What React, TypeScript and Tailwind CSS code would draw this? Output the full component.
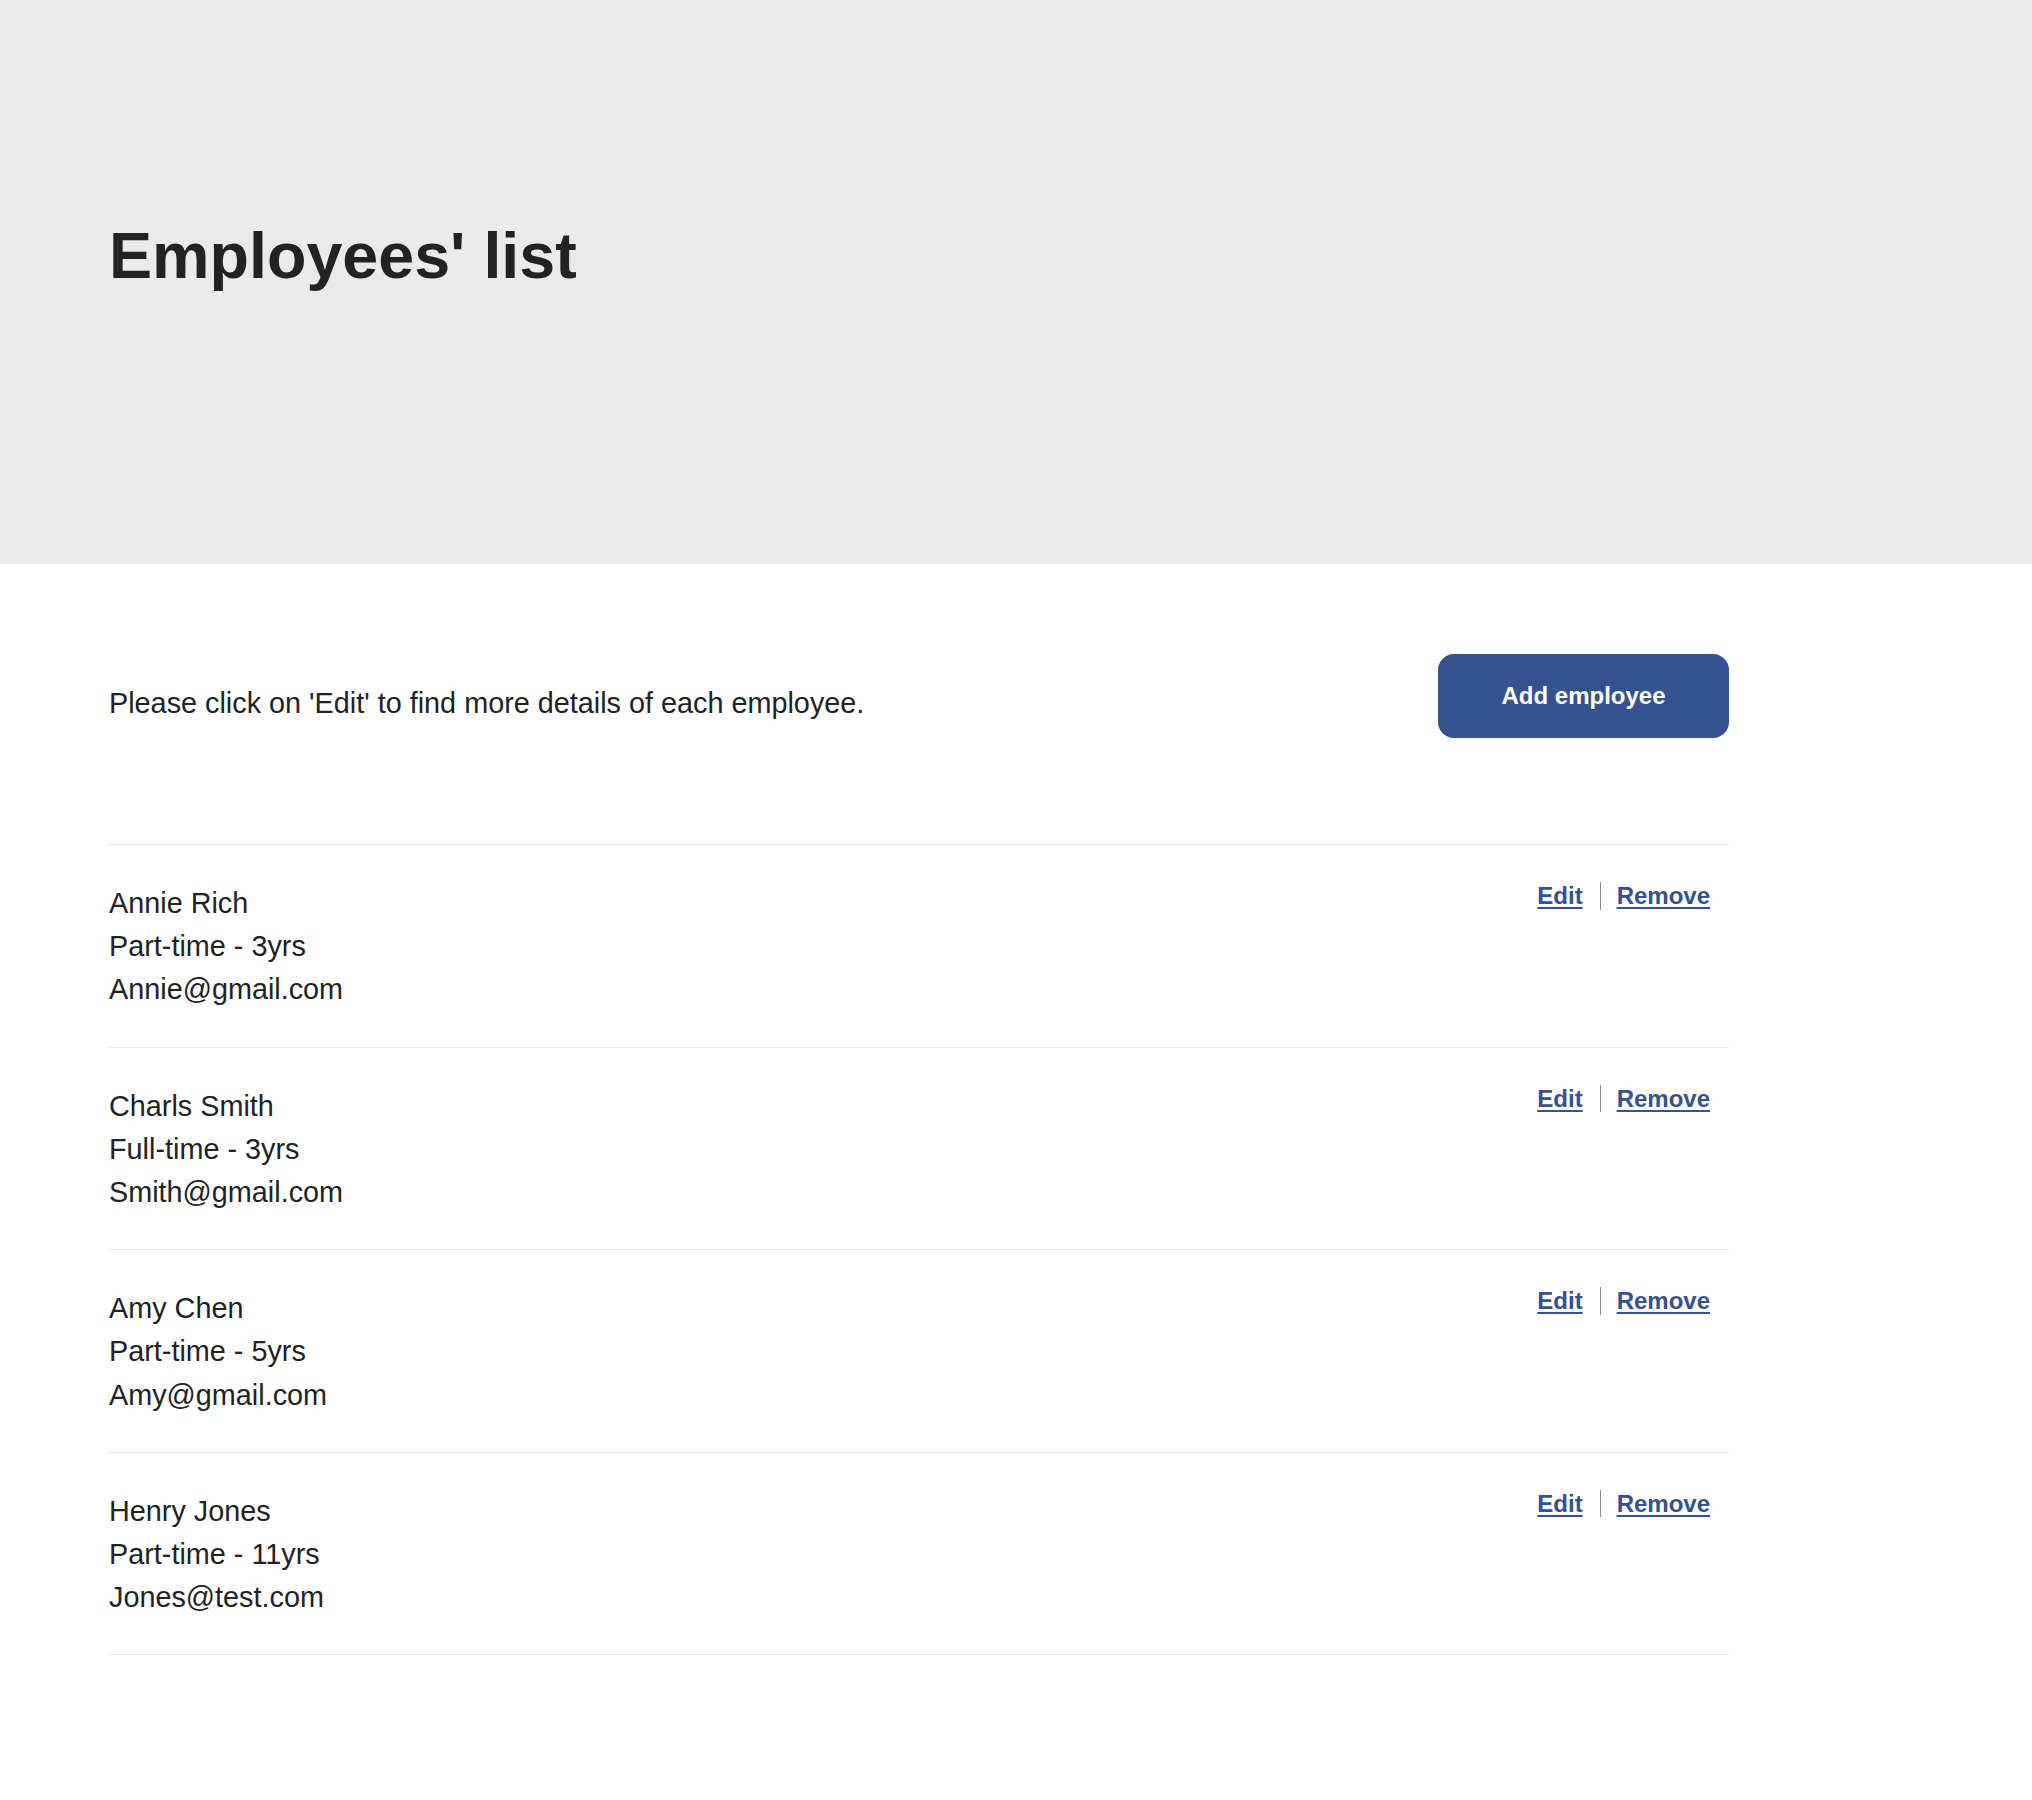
const employees = [
  { name: 'Annie Rich', type: 'Part-time', years: 3, email: 'Annie@gmail.com' },
  { name: 'Charls Smith', type: 'Full-time', years: 3, email: 'Smith@gmail.com' },
  { name: 'Amy Chen', type: 'Part-time', years: 5, email: 'Amy@gmail.com' },
  { name: 'Henry Jones', type: 'Part-time', years: 11, email: 'Jones@test.com' },
];

const App = () => {
  return (
    <div className="min-h-[1800px] bg-white text-[#222222] font-['Liberation_Sans',Arial,sans-serif]">
      {/* Header */}
      <header className="h-[564px] bg-[#eaeaea] px-[109px] pt-[224px]">
        <h1 className="text-[64.6px] font-bold leading-none">Employees' list</h1>
      </header>

      <main className="ml-[109px] w-[1620px] pt-[90px]">
        <div className="flex items-start justify-between mb-[106px]">
          <p className="mt-[28px] text-[28.8px] leading-[1.5]">
            Please click on 'Edit' to find more details of each employee.
          </p>
          <button className="w-[291px] h-[84px] rounded-[16px] bg-[#34528f] text-white text-[24px] font-bold">
            Add employee
          </button>
        </div>

        <ul className="border-b border-[#e6e6e6]">
          {employees.map((emp) => (
            <li
              key={emp.email}
              className="flex justify-between border-t border-[#e6e6e6] pt-[37px] pb-[35px]"
            >
              <div className="text-[28.8px] leading-[1.5]">
                <div>{emp.name}</div>
                <div>
                  {emp.type} - {emp.years}yrs
                </div>
                <div>{emp.email}</div>
              </div>
              <div className="flex items-start pr-[19px] text-[24px] font-bold leading-[1.15] text-[#34528f]">
                <a href="#" className="underline decoration-2 underline-offset-[3px] pr-[17px]">
                  Edit
                </a>
                <a
                  href="#"
                  className="underline decoration-2 underline-offset-[3px] border-l border-[#8a8a8a] pl-[16px]"
                >
                  Remove
                </a>
              </div>
            </li>
          ))}
        </ul>
      </main>
    </div>
  );
};

export default App;
